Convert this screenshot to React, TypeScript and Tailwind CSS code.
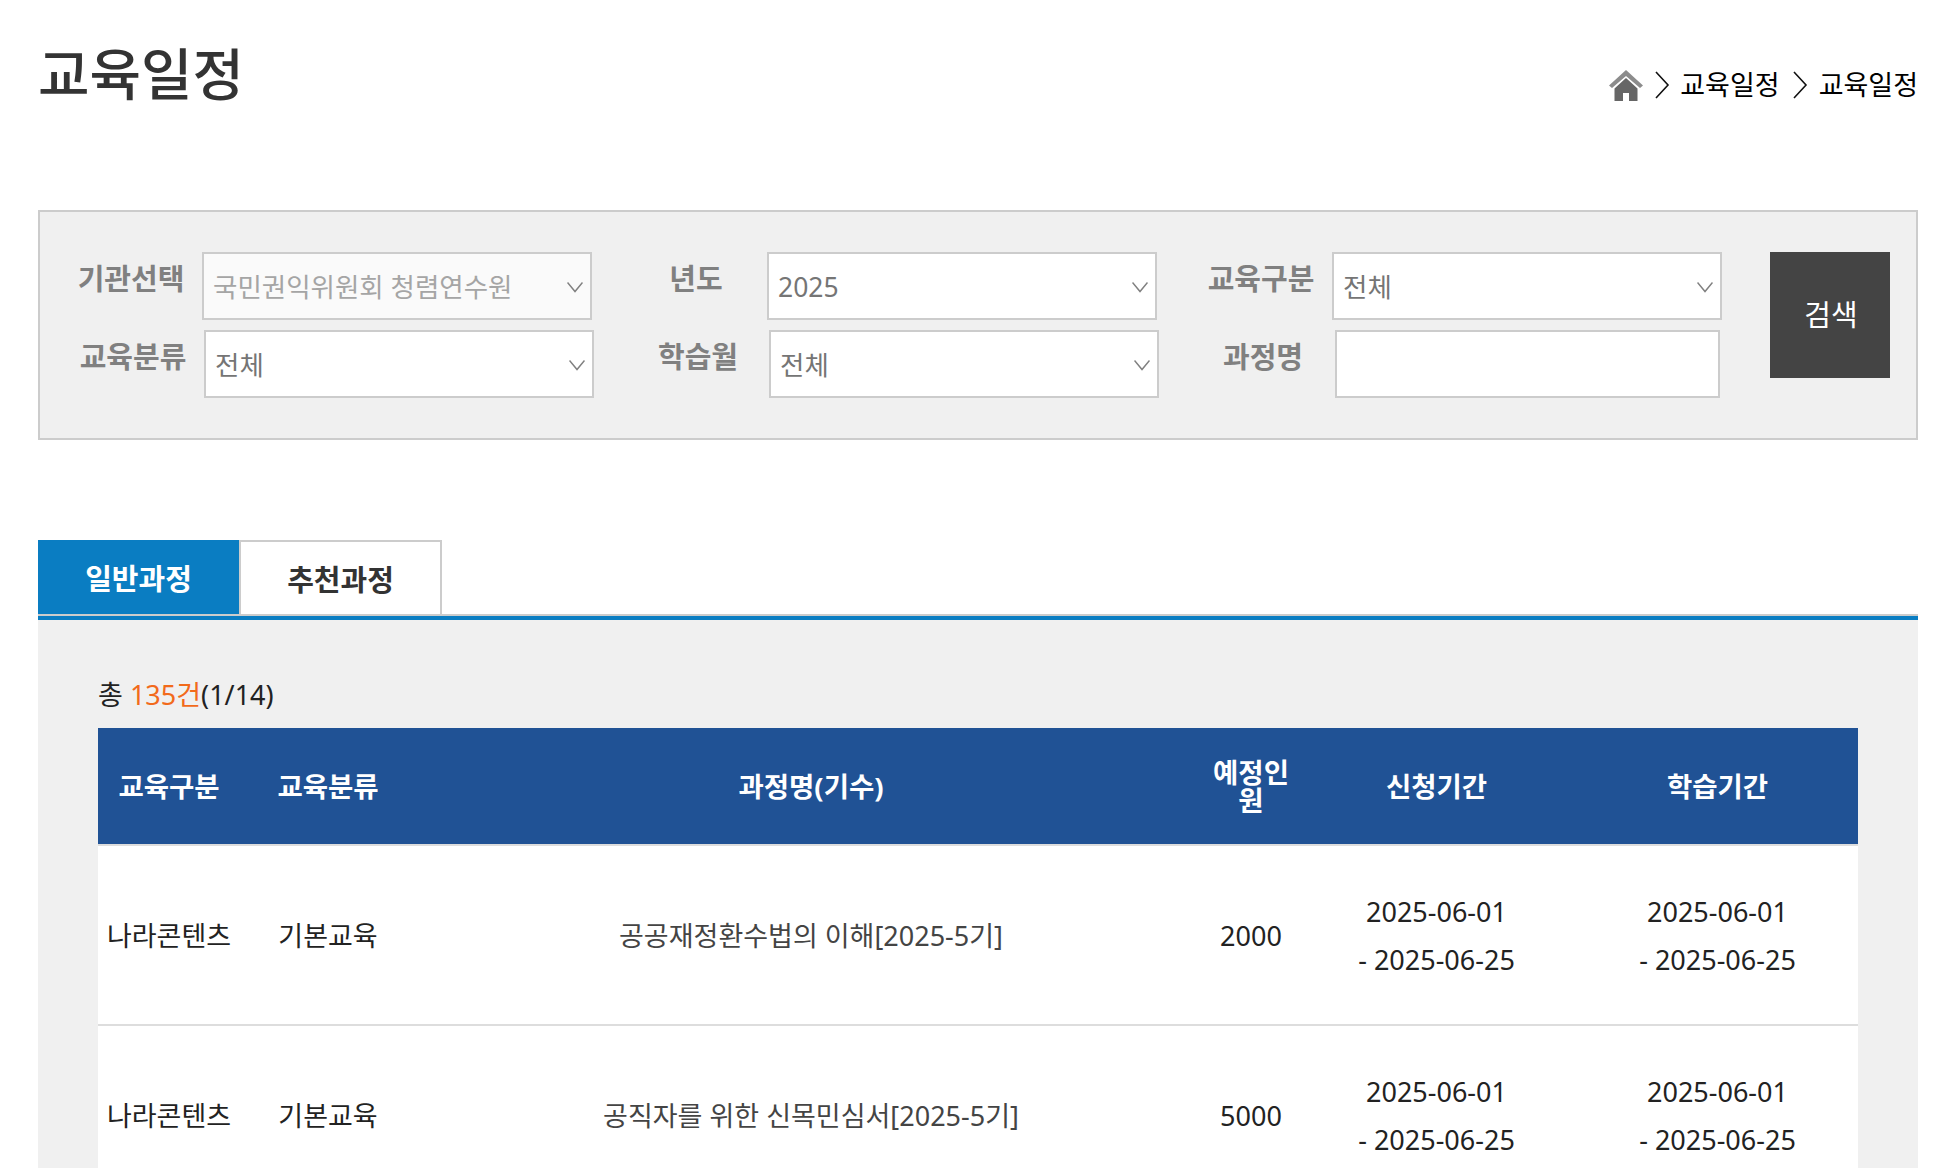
import React from "react";

const Rows = [
  { Kind: "나라콘텐츠", Category: "기본교육", Title: "공공재정환수법의 이해[2025-5기]", Seats: "2000" },
  { Kind: "나라콘텐츠", Category: "기본교육", Title: "공직자를 위한 신목민심서[2025-5기]", Seats: "5000" },
];

function Chevron() {
  return (
    <svg className="absolute right-[9px] top-[30px] pointer-events-none" width="16" height="11" viewBox="0 0 16 11" fill="none">
      <path d="M0.5 0.5l7.5 9 7.5-9" stroke="#808080" strokeWidth="1.5" />
    </svg>
  );
}

function SelectBox({ Value, Disabled = false }: { Value: string; Disabled?: boolean }) {
  return (
    <div className="relative w-[390px] h-[68px] shrink-0">
      <select
        disabled={Disabled}
        defaultValue={Value}
        className={
          "w-full h-full appearance-none border-2 border-[#cccccc] pl-[9px] pt-[3px] text-[26.5px] opacity-100 outline-none " +
          (Disabled ? "bg-[#fafafa] text-[#a5a5a5]" : "bg-white text-[#757575]")
        }
      >
        <option>{Value}</option>
      </select>
      <Chevron />
    </div>
  );
}

function Label({ Text }: { Text: string }) {
  return (
    <div className="w-[142px] shrink-0 pb-[15px] flex items-center justify-center text-[29px] font-bold text-[#808080]">
      {Text}
    </div>
  );
}

function Gap() {
  return <div className="w-[33px] shrink-0" />;
}

export default function App() {
  return (
    <div className="w-[1944px] h-[1168px] overflow-hidden bg-white font-['Noto_Sans','Noto_Sans_CJK_KR',sans-serif]">
      <div className="ml-[38px] w-[1880px]">
        <div className="h-[210px] flex justify-between items-start">
          <h1 className="mt-[33px] text-[56px] leading-[80px] font-medium text-[#333333]">교육일정</h1>
          <div className="mt-[66px] flex items-center text-[27px] leading-[38px] text-black">
            <svg className="mr-[12px]" width="34" height="31" viewBox="0 0 34 31">
              <path d="M17 0L0 15.5l3 2.5L17 6l14 12 3-2.5z" fill="#8c8c8c" />
              <path d="M17 8L5.5 18.5V31H14v-8h6v8h8.5V18.5z" fill="#666666" />
            </svg>
            <svg className="mr-[10px]" width="15" height="28" viewBox="0 0 15 28" fill="none">
              <path d="M1 1l12 13L1 27" stroke="#111" strokeWidth="1.6" />
            </svg>
            <span className="mr-[13px]">교육일정</span>
            <svg className="mr-[11px]" width="15" height="28" viewBox="0 0 15 28" fill="none">
              <path d="M1 1l12 13L1 27" stroke="#111" strokeWidth="1.6" />
            </svg>
            <span>교육일정</span>
          </div>
        </div>

        <div className="h-[230px] border-2 border-[#cccccc] bg-[#f0f0f0] pt-[40px] pl-[20px] relative">
          <div className="flex h-[68px]">
            <Label Text="기관선택" />
            <SelectBox Value="국민권익위원회 청렴연수원" Disabled />
            <Gap />
            <Label Text="년도" />
            <SelectBox Value="2025" />
            <Gap />
            <Label Text="교육구분" />
            <SelectBox Value="전체" />
          </div>
          <div className="flex h-[68px] mt-[10px] ml-[2px]">
            <Label Text="교육분류" />
            <SelectBox Value="전체" />
            <Gap />
            <Label Text="학습월" />
            <SelectBox Value="전체" />
            <Gap />
            <Label Text="과정명" />
            <input className="ml-[1px] w-[385px] h-[68px] bg-white border-2 border-[#cccccc] outline-none" />
          </div>
          <button className="absolute left-[1730px] top-[40px] w-[120px] h-[126px] pl-[2px] bg-[#444444] text-white text-[29px]">
            검색
          </button>
        </div>

        <div className="mt-[100px] flex h-[74px]">
          <div className="w-[201px] pt-[3px] bg-[#0a7dc2] text-white text-[29px] font-bold flex items-center justify-center">
            일반과정
          </div>
          <div className="w-[203px] pt-[3px] bg-white border-2 border-b-0 border-[#cccccc] text-[#333333] text-[29px] font-bold flex items-center justify-center">
            추천과정
          </div>
        </div>
        <div className="h-[2px] bg-[#cccccc]" />
        <div className="h-[4px] bg-[#0a7dc2]" />

        <div className="bg-[#f0f0f0] px-[60px] pt-[56px] pb-[40px]">
          <p className="text-[27px] leading-[38px] mb-[14px] text-[#222222]">
            총 <span className="text-[#f26a1b]">135건</span>(1/14)
          </p>
          <table className="w-[1760px] table-fixed border-collapse">
            <colgroup>
              <col className="w-[142px]" />
              <col className="w-[176px]" />
              <col className="w-[790px]" />
              <col className="w-[90px]" />
              <col className="w-[281px]" />
              <col className="w-[281px]" />
            </colgroup>
            <thead>
              <tr className="h-[117px] bg-[#205295] text-white text-[27.5px] leading-[28px] font-bold border-b-2 border-[#dddddd]">
                <th className="pt-[2px]">교육구분</th>
                <th className="pt-[2px]">교육분류</th>
                <th className="pt-[2px]">과정명(기수)</th>
                <th className="pt-[2px] px-[6px]">예정인원</th>
                <th className="pt-[2px]">신청기간</th>
                <th className="pt-[2px]">학습기간</th>
              </tr>
            </thead>
            <tbody>
              {Rows.map((Row) => (
                <tr key={Row.Title} className="h-[180px] bg-white text-[27px] leading-[48px] text-center text-[#222222] border-b-2 border-[#dddddd]">
                  <td className="pt-[2px]">{Row.Kind}</td>
                  <td className="pt-[2px]">{Row.Category}</td>
                  <td className="pt-[2px] text-[#444444]">{Row.Title}</td>
                  <td className="pt-[2px]">{Row.Seats}</td>
                  <td className="pt-[2px]">
                    2025-06-01
                    <br />- 2025-06-25
                  </td>
                  <td className="pt-[2px]">
                    2025-06-01
                    <br />- 2025-06-25
                  </td>
                </tr>
              ))}
            </tbody>
          </table>
        </div>
      </div>
    </div>
  );
}
